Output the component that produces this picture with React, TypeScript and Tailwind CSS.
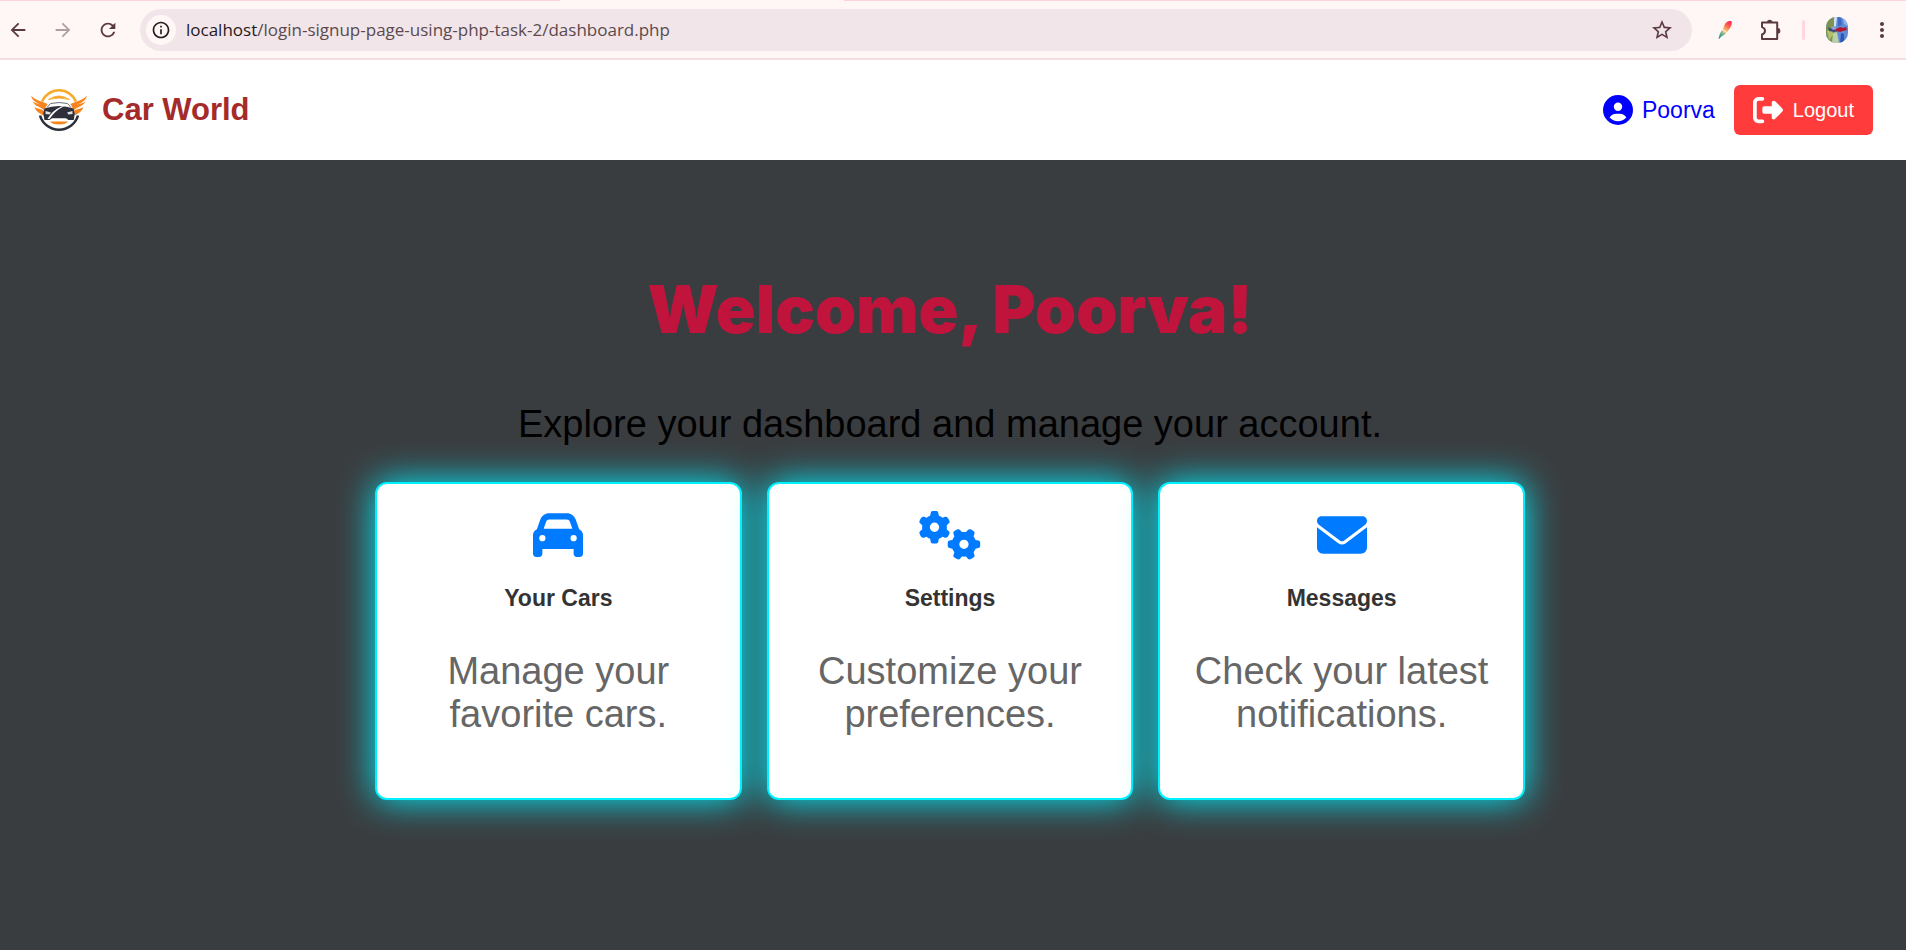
import type { ReactNode } from 'react';
import { FaCar, FaGears, FaEnvelope, FaCircleUser, FaRightFromBracket } from 'react-icons/fa6';
import { MdArrowBack, MdArrowForward, MdRefresh, MdInfoOutline, MdStarBorder, MdMoreVert } from 'react-icons/md';

function FeatherIcon() {
  return (
    <svg viewBox="0 0 14 20" className="h-5 w-[14px]">
      <defs>
        <linearGradient id="quill" x1="13" y1="1" x2="1" y2="19" gradientUnits="userSpaceOnUse">
          <stop offset="0.05" stopColor="#ff1f5a" />
          <stop offset="0.3" stopColor="#ff6a45" />
          <stop offset="0.55" stopColor="#f5cf8a" />
          <stop offset="0.75" stopColor="#5fae8c" />
          <stop offset="1" stopColor="#0b7aa0" />
        </linearGradient>
      </defs>
      <path d="M13.500 1.200C11 .3 8.200 1.500 6.800 4.500L4.800 9.200 9 12.200 12 8C13.600 5.800 14 3.200 13.500 1.200Z" fill="url(#quill)" />
      <path d="M4.400 9.800 8.400 12.700C6.500 15 4.800 15.500 3.400 16.500L.9 19 .6 18.500 1.400 15.500C1.800 13.500 2.800 11.500 4.400 9.800Z" fill="url(#quill)" />
    </svg>
  );
}

function PuzzleIcon() {
  return (
    <svg viewBox="0 0 22 22" className="size-[22px]">
      <path d="M2 3.600H17.200V20H2V15.500C6 14.500 6 9.100 2 8.100Z" fill="none" stroke="currentColor" strokeWidth="2" strokeLinejoin="round" />
      <path d="M7 3.500A2.700 2.700 0 0 1 12.400 3.500Z" fill="currentColor" />
      <path d="M17.500 9A2.900 2.900 0 0 1 17.500 14.800Z" fill="currentColor" />
    </svg>
  );
}

function Avatar() {
  return (
    <svg viewBox="0 0 22 26" className="h-[26px] w-[22px]">
      <defs>
        <clipPath id="avatar"><rect width="22" height="26" rx="10" /></clipPath>
      </defs>
      <g clipPath="url(#avatar)">
        <rect width="22" height="26" fill="#5f8bd6" />
        <path d="M0 0h8l-1 8 2 6-2 12H0Z" fill="#7d9450" />
        <path d="M1 14l5-2 1 6-4 5Z" fill="#b3bf6c" />
        <path d="M8 0h3l-1 9-2 2Z" fill="#d3e1f2" />
        <path d="M12 0h3l1 8-4 1Z" fill="#3c6cc4" />
        <path d="M17 0h5v9l-4-2Z" fill="#93b4e6" />
        <path d="M7 16l4-1 2 11H6Z" fill="#bcd0a4" />
        <path d="M15 16l3 1v9h-4Z" fill="#2c57b8" />
        <path d="M2 10l4 2 4-1 2 3-4 1-5-1Z" fill="#3b4a78" />
        <path d="M5 10l4-1 2 3-4 1Z" fill="#8ea2cf" />
        <path d="M10 12l4-2 3 1 3-1 1 3-4 1-3 1-4-1Z" fill="#b3142c" />
      </g>
    </svg>
  );
}

function Logo() {
  return (
    <svg viewBox="0 0 56 44" className="h-11 w-14" role="img" aria-label="Car World logo">
      <path d="M11 13.500A18.500 18.500 0 0 1 45 13.500" fill="none" stroke="#f5ab2c" strokeWidth="2.600" />
      <path d="M17.500 11.500Q28 4.500 38.500 11.500Q28 8.600 17.500 11.500Z" fill="#f5a623" stroke="#f5a623" strokeWidth=".8" />
      <path d="M.3 7.500C4 12.500 10 13 16.500 16L13 22.500C11 19 3.500 18.500 1.800 13.800 4.500 15.500 8 16 10 16.800 5.500 14.500 .8 13 .3 7.500Z" fill="#f9831c" />
      <path d="M3.500 19C6 21 10 20.500 13 23L12.500 27.500C10 26 5.500 24.500 3.500 19Z" fill="#f9831c" />
      <path d="M55.700 7.500C52 12.500 46 13 39.500 16L43 22.500C45 19 52.500 18.500 54.200 13.800 51.500 15.500 48 16 46 16.800 50.500 14.500 55.200 13 55.700 7.500Z" fill="#f9831c" />
      <path d="M52.500 19C50 21 46 20.500 43 23L43.500 27.500C46 26 50.500 24.500 52.500 19Z" fill="#f9831c" />
      <path d="M9 27.500A19.800 19.800 0 0 0 47 27.500" fill="none" stroke="#2d303b" strokeWidth="2.600" />
      <path d="M19 33.500H37Q35 36.500 28 36.500T19 33.500Z" fill="#f9831c" />
      <path d="M16 19.500 19.500 15.500Q28 13.600 36.500 15.500L40 19.500" fill="#fff" stroke="#6b6f7a" strokeWidth="1" />
      <path d="M13.500 20.500Q20 18 28 18T42.500 20.500L43.800 25.500 42.800 32H37.500L35 30.200H21L18.500 32H13.500L12.200 25.500Z" fill="#2d303b" />
      <path d="M33 18.200Q24 22.500 18.500 31L16.500 31Q21 22.500 31 18.200Z" fill="#fff" />
      <path d="M14.500 23 20 24.500 18.500 26.500 14.500 26ZM41.500 23 36 24.500 37.500 26.500 41.500 26Z" fill="#dfe1e6" />
    </svg>
  );
}

function BrowserBar() {
  return (
    <div className="flex flex-col border-b-2 border-[#f2dde1] bg-[#fff7f5]">
      <div className="flex h-px">
        <div className="w-[560px] bg-[#ffd1dc]" />
        <div className="w-[284px]" />
        <div className="flex-1 bg-[#ffd1dc]" />
      </div>
      <div className="flex h-[57px] items-center pr-3 text-[#5a3a40]">
        <button aria-label="Back" className="ml-[7px] text-[22px]"><MdArrowBack /></button>
        <button aria-label="Forward" className="ml-[23px] text-[22px] text-[#b0a0a3]"><MdArrowForward /></button>
        <button aria-label="Reload" className="ml-[23px] text-[22px]"><MdRefresh /></button>
        <div className="ml-[21px] flex h-[42px] flex-1 items-center rounded-full bg-[#f1e5e9] pr-[18px] pl-1.5">
          <button aria-label="Site information" className="grid size-[30px] place-items-center rounded-full bg-[#fff7f5] text-[20px] text-[#241a1c]"><MdInfoOutline /></button>
          <div className="ml-2.5 flex-1 font-['Open_Sans','Noto_Sans',sans-serif] text-[17px] text-[#5a4a4e]">
            <span className="text-[#1f1a1c]">localhost</span>/login-signup-page-using-php-task-2/dashboard.php
          </div>
          <button aria-label="Bookmark" className="text-[24px]"><MdStarBorder /></button>
        </div>
        <button aria-label="Color picker" className="ml-[26px]"><FeatherIcon /></button>
        <button aria-label="Extensions" className="ml-7"><PuzzleIcon /></button>
        <div className="ml-5 h-5 w-[3px] rounded-full bg-[#ffd7e0]" />
        <button aria-label="Profile" className="ml-[21px]"><Avatar /></button>
        <button aria-label="Menu" className="ml-[22px] text-[24px]"><MdMoreVert /></button>
      </div>
    </div>
  );
}

function Card({ icon, title, children }: { icon: ReactNode; title: string; children: ReactNode }) {
  return (
    <section className="flex flex-col items-center rounded-[12px] border-2 border-[#00f0ff] bg-white px-6 pt-[26px] pb-[62px] text-center shadow-[0_0_36px_#00f0ff]">
      <div className="text-[#007bff]">{icon}</div>
      <h2 className="mt-[25px] text-[23px] leading-[26px] font-bold text-[#333]">{title}</h2>
      <p className="mt-[39px] text-[38px] leading-[43px] text-[#666]">{children}</p>
    </section>
  );
}

export default function App() {
  return (
    <div className="flex min-h-screen flex-col bg-[#3a3d40] font-['Liberation_Sans',Arial,sans-serif]">
      <BrowserBar />
      <header className="flex h-[100px] items-center justify-between bg-white pr-[33px] pl-[31px]">
        <a href="#" className="flex items-center gap-[15px]">
          <Logo />
          <span className="text-[31px] font-bold text-[#a52a2a]">Car World</span>
        </a>
        <nav className="flex items-center gap-[19px]">
          <a href="#" className="flex items-center gap-[9px] text-[23px] text-[#0000ff]">
            <FaCircleUser className="size-[30px]" />
            Poorva
          </a>
          <a href="#" className="flex h-[50px] items-center gap-2.5 rounded-md bg-[#ff3b3b] px-[19px] text-[20px] text-white">
            <FaRightFromBracket className="size-[30px]" />
            Logout
          </a>
        </nav>
      </header>
      <main className="flex flex-1 flex-col items-center pt-[105px] pr-[30px] pb-6 pl-6 text-center">
        <h1 className="font-['Arial_Black',Inter,sans-serif] text-[66px] leading-[88px] font-black text-[#c0143c]">Welcome, Poorva!</h1>
        <p className="mt-[50px] text-[38px] leading-[43px] text-black">Explore your dashboard and manage your account.</p>
        <div className="mt-9 grid w-full max-w-[1150px] grid-cols-3 gap-[25px]">
          <Card icon={<FaCar className="size-[50px]" />} title="Your Cars">Manage your favorite cars.</Card>
          <Card icon={<FaGears className="h-[50px] w-[62px]" />} title="Settings">Customize your preferences.</Card>
          <Card icon={<FaEnvelope className="size-[50px]" />} title="Messages">Check your latest notifications.</Card>
        </div>
      </main>
    </div>
  );
}
